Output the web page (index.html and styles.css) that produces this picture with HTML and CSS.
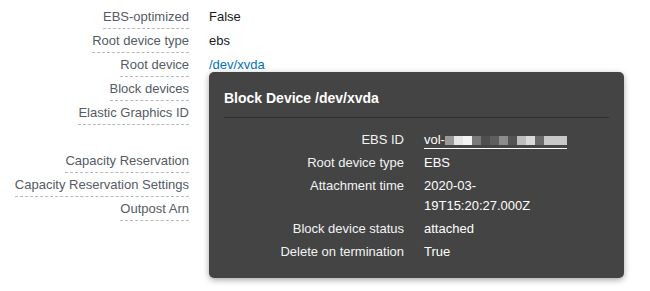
FILE: index.html
```html
<!DOCTYPE html>
<html lang="en">
<head>
    <meta charset="UTF-8">
    <meta name="viewport" content="width=device-width, initial-scale=1.0">
    <title>Instance details</title>
    <link rel="stylesheet" href="styles.css">
</head>
<body>
    <div class="details">
        <div class="row">
            <div class="label"><span>EBS-optimized</span></div>
            <div class="value">False</div>
        </div>
        <div class="row">
            <div class="label"><span>Root device type</span></div>
            <div class="value">ebs</div>
        </div>
        <div class="row">
            <div class="label"><span>Root device</span></div>
            <div class="value anchor">
                <a href="#">/dev/xvda</a>

                <div class="popover">
                    <h2>Block Device /dev/xvda</h2>
                    <div class="pop-grid">
                        <div class="pop-label">EBS ID</div>
                        <div class="pop-value">
                            <a href="#" class="vol">vol-<span class="masked">
                                <i class="m1"></i><i class="m2"></i><i class="m3"></i><i class="m4"></i><i class="m5"></i><i class="m6"></i><i class="m7"></i><i class="m8"></i><i class="m9"></i><i class="m10"></i><i class="m11"></i><i class="m12"></i>
                            </span></a>
                        </div>

                        <div class="pop-label">Root device type</div>
                        <div class="pop-value">EBS</div>

                        <div class="pop-label">Attachment time</div>
                        <div class="pop-value">2020-03-<br>19T15:20:27.000Z</div>

                        <div class="pop-label">Block device status</div>
                        <div class="pop-value">attached</div>

                        <div class="pop-label">Delete on termination</div>
                        <div class="pop-value">True</div>
                    </div>
                </div>
            </div>
        </div>
        <div class="row">
            <div class="label"><span>Block devices</span></div>
            <div class="value"></div>
        </div>
        <div class="row">
            <div class="label"><span>Elastic Graphics ID</span></div>
            <div class="value"></div>
        </div>
        <div class="row">
            <div class="label"></div>
            <div class="value"></div>
        </div>
        <div class="row">
            <div class="label"><span>Capacity Reservation</span></div>
            <div class="value"></div>
        </div>
        <div class="row">
            <div class="label"><span>Capacity Reservation Settings</span></div>
            <div class="value"></div>
        </div>
        <div class="row">
            <div class="label"><span>Outpost Arn</span></div>
            <div class="value"></div>
        </div>
    </div>
</body>
</html>
```

FILE: styles.css
```css
* {
    margin: 0;
    padding: 0;
    box-sizing: border-box;
}

html, body {
    min-height: 100%;
}

body {
    font-family: 'Liberation Sans', Arial, Helvetica, sans-serif;
    font-size: 13px;
    background: #ffffff;
    color: #16191f;
    min-height: 100vh;
}

.details {
    padding-top: 8px;
    min-height: 291px;
}

.row {
    display: grid;
    grid-template-columns: 189px 1fr;
    column-gap: 20px;
    height: 21px;
    margin-bottom: 3px;
}

.label {
    text-align: right;
    color: #545b64;
}

.label span {
    display: inline-block;
    line-height: 18px;
    padding-bottom: 2px;
    border-bottom: 1px dashed #b5b9bd;
}

.value {
    line-height: 18px;
}

.value a {
    color: #0073bb;
    text-decoration: none;
}

.anchor {
    position: relative;
}

.popover {
    position: absolute;
    top: 16px;
    left: 0;
    z-index: 10;
    width: 415px;
    background: #444444;
    border-radius: 5px;
    box-shadow: 0 2px 6px rgba(0,0,0,0.35);
    padding: 16px 15px 16px 15px;
    color: #ffffff;
}

.popover h2 {
    font-size: 14px;
    font-weight: 700;
    line-height: 20px;
    padding-bottom: 9px;
    border-bottom: 1px solid #2e2e2e;
    margin-bottom: 12px;
}

.pop-grid {
    display: grid;
    grid-template-columns: 180px 150px;
    column-gap: 20px;
    row-gap: 3px;
    line-height: 20px;
}

.pop-label {
    text-align: right;
    color: #f2f3f3;
}

.pop-value {
    color: #ffffff;
}

.popover .vol {
    color: #ffffff;
    text-decoration: none;
    display: inline-flex;
    align-items: center;
    border-bottom: 1px solid #ffffff;
    line-height: 16px;
}

.masked {
    display: inline-flex;
    height: 9px;
}

.masked i {
    display: block;
    width: 9px;
    height: 9px;
}

.m1 { background: #9a9a9a; }
.m2 { background: #e6e6e6; }
.m3 { background: #f4f4f4; }
.m4 { background: #7a7a7a; }
.m5 { background: #4f4f4f; }
.m6 { background: #5e5e5e; }
.m7 { background: #8c8c8c; }
.m8 { background: #535353; }
.m9 { background: #bdbdbd; }
.m10 { background: #d9d9d9; }
.m11 { background: #6a6a6a; }
.m12 { background: #c8c8c8; width: 23px !important; }
```
